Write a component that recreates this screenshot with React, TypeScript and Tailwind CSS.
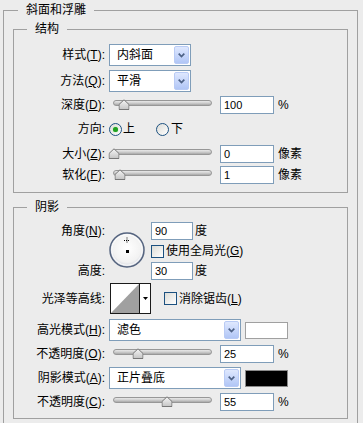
import type { ReactNode } from "react";

const Label = ({ t, k }: { t: string; k?: string }) => (
  <div className="w-[91px] shrink-0 text-right leading-[16px]">
    {t}
    {k ? (
      <>
        (<span className="underline">{k}</span>)
      </>
    ) : null}
    :
  </div>
);

const DropButton = () => (
  <div className="mr-[1px] flex h-[18px] w-[15px] items-center justify-center rounded-[2px] border border-[#b9cbf5] bg-linear-to-b from-[#dfe8fe] to-[#b1c6f6]">
    <svg width="7" height="5" viewBox="0 0 7 5">
      <path d="M0.7 0.7 L3.5 3.6 L6.3 0.7" fill="none" stroke="#4d6185" strokeWidth="1.7" />
    </svg>
  </div>
);

const Select = ({ value, w }: { value: string; w: string }) => (
  <div className={`flex h-[22px] items-center border border-[#7f9db9] bg-white ${w}`}>
    <span className="flex-1 pl-[7px] leading-[16px]">{value}</span>
    <DropButton />
  </div>
);

const Thumb = ({ pct }: { pct: number }) => (
  <svg
    className="absolute top-[-2px] -translate-x-1/2"
    style={{ left: `${pct}%` }}
    width="11"
    height="11"
    viewBox="0 0 11 11"
  >
    <defs>
      <linearGradient id="th" x1="0" y1="0" x2="0" y2="1">
        <stop offset="0" stopColor="#f6f6f6" />
        <stop offset="1" stopColor="#c4c4c4" />
      </linearGradient>
    </defs>
    <path d="M0.5 10.5 V5.5 L5.5 0.8 L10.5 5.5 V10.5 Z" fill="url(#th)" stroke="#777" strokeLinejoin="round" />
  </svg>
);

const Slider = ({ pct }: { pct: number }) => (
  <div className="h-[18px] w-[107px] shrink-0 px-[4px] pt-[4px]">
    <div className="relative h-[6px] rounded-full border border-[#979797] bg-linear-to-b from-[#e8e8e8] via-[#cfcfcf] to-[#a8a8a8]">
      <Thumb pct={pct} />
    </div>
  </div>
);

const Field = ({ v, w = "w-[54px]" }: { v: string; w?: string }) => (
  <div className={`h-[18px] shrink-0 border border-[#7f9db9] bg-white pl-[3px] text-[11px] leading-[16px] ${w}`}>
    {v}
  </div>
);

const Radio = ({ on, className = "" }: { on?: boolean; className?: string }) => (
  <div
    className={`flex h-[13px] w-[13px] shrink-0 items-center justify-center rounded-full border border-[#1c5180] bg-linear-to-br from-[#dcdcd7] to-white ${className}`}
  >
    {on ? <div className="h-[5px] w-[5px] rounded-full bg-[#21a121] shadow-[0_0_1px_#5fd35f]" /> : null}
  </div>
);

const Check = ({ className = "" }: { className?: string }) => (
  <div className={`h-[13px] w-[13px] shrink-0 border border-[#1c5180] bg-linear-to-br from-[#dcdcd7] to-white ${className}`} />
);

const Row = ({ className = "", children }: { className?: string; children: ReactNode }) => (
  <div className={`flex items-center gap-[4px] ${className}`}>{children}</div>
);

const AngleDial = () => (
  <svg width="36" height="36" viewBox="0 0 36 36" className="ml-[4px] mb-[3px] shrink-0">
    <defs>
      <radialGradient id="dial" cx="0.5" cy="0.45" r="0.55">
        <stop offset="0" stopColor="#ffffff" />
        <stop offset="0.75" stopColor="#f2f2f2" />
        <stop offset="1" stopColor="#cfd3dd" />
      </radialGradient>
    </defs>
    <circle cx="18" cy="18" r="17" fill="url(#dial)" stroke="#55647f" strokeWidth="1.5" />
    <circle cx="18" cy="18" r="15.3" fill="none" stroke="#ffffff" strokeOpacity="0.8" />
    <path d="M15 8.5 H21 M18 5.5 V11.5" stroke="#000" strokeDasharray="1 1" />
    <rect x="17" y="18" width="3" height="3" fill="#000" />
  </svg>
);

const Contour = () => (
  <div className="ml-[1px] flex h-[31px] w-[41px] shrink-0 border border-[#1a1a1a] bg-white">
    <svg width="28" height="29" viewBox="0 0 28 29" className="shrink-0">
      <polygon points="0,29 28,0 28,29" fill="#a0a0a0" />
    </svg>
    <div className="flex flex-1 items-center justify-center border-l border-[#1a1a1a]">
      <svg width="5" height="3" viewBox="0 0 5 3">
        <polygon points="0,0 5,0 2.5,3" fill="#000" />
      </svg>
    </div>
  </div>
);

export default function App() {
  return (
    <div className="h-[423px] w-[363px] overflow-hidden bg-[#ececec] pl-[3px] font-['Liberation_Sans','Noto_Sans_CJK_SC',sans-serif] text-[12px] text-black">
      <fieldset className="w-[355px] border border-[#a0a0a0] px-[9px] pb-[10px]">
        <legend className="ml-[5px] px-[8px] leading-[21px]">斜面和浮雕</legend>

        <fieldset className="border border-[#a0a0a0] pt-[6px] pb-[8px]">
          <legend className="ml-[13px] px-[8px] leading-[17px]">结构</legend>
          <Row className="h-[22px]">
            <Label t="样式" k="T" />
            <Select value="内斜面" w="w-[82px]" />
          </Row>
          <Row className="mt-[4px] h-[22px]">
            <Label t="方法" k="Q" />
            <Select value="平滑" w="w-[82px]" />
          </Row>
          <Row className="mt-[4px] h-[18px]">
            <Label t="深度" k="D" />
            <Slider pct={10} />
            <Field v="100" />
            <span className="leading-[16px]">%</span>
          </Row>
          <Row className="mt-[6px] h-[18px]">
            <Label t="方向" />
            <div className="flex items-center">
              <Radio on />
              <span className="ml-[1px] leading-[16px]">上</span>
              <Radio className="ml-[21px]" />
              <span className="ml-[2px] leading-[16px]">下</span>
            </div>
          </Row>
          <Row className="mt-[7px] h-[18px]">
            <Label t="大小" k="Z" />
            <Slider pct={0} />
            <Field v="0" />
            <span className="leading-[16px]">像素</span>
          </Row>
          <Row className="mt-[3px] h-[18px]">
            <Label t="软化" k="F" />
            <Slider pct={6} />
            <Field v="1" />
            <span className="leading-[16px]">像素</span>
          </Row>
        </fieldset>

        <fieldset className="mt-[4px] border border-[#a0a0a0] pt-[4px] pb-[7px]">
          <legend className="ml-[13px] px-[8px] leading-[21px]">阴影</legend>
          <div className="flex h-[58px] items-center">
            <div className="flex h-full w-[91px] shrink-0 flex-col justify-between">
              <div className="flex h-[18px] items-center justify-end">
                <Label t="角度" k="N" />
              </div>
              <div className="flex h-[18px] items-center justify-end">
                <Label t="高度" />
              </div>
            </div>
            <AngleDial />
            <div className="ml-[6px] flex flex-col">
              <div className="flex h-[18px] items-center gap-[2px]">
                <Field v="90" w="w-[42px]" />
                <span className="leading-[16px]">度</span>
              </div>
              <div className="flex h-[22px] items-center gap-[2px]">
                <Check />
                <span className="leading-[16px]">
                  使用全局光(<span className="underline">G</span>)
                </span>
              </div>
              <div className="flex h-[18px] items-center gap-[2px]">
                <Field v="30" w="w-[42px]" />
                <span className="leading-[16px]">度</span>
              </div>
            </div>
          </div>
          <Row className="mt-[3px] h-[31px]">
            <Label t="光泽等高线" />
            <Contour />
            <Check className="ml-[9px]" />
            <span className="-ml-[2px] leading-[16px]">
              消除锯齿(<span className="underline">L</span>)
            </span>
          </Row>
          <Row className="mt-[5px] h-[22px]">
            <Label t="高光模式" k="H" />
            <Select value="滤色" w="w-[132px]" />
            <div className="h-[17px] w-[43px] border border-[#a0a0a0] bg-white" />
          </Row>
          <Row className="mt-[4px] h-[18px]">
            <Label t="不透明度" k="O" />
            <Slider pct={25} />
            <Field v="25" />
            <span className="leading-[16px]">%</span>
          </Row>
          <Row className="mt-[4px] h-[22px]">
            <Label t="阴影模式" k="A" />
            <Select value="正片叠底" w="w-[132px]" />
            <div className="h-[17px] w-[43px] border border-[#8a8a8a] bg-black" />
          </Row>
          <Row className="mt-[4px] h-[18px]">
            <Label t="不透明度" k="C" />
            <Slider pct={55} />
            <Field v="55" />
            <span className="leading-[16px]">%</span>
          </Row>
        </fieldset>
      </fieldset>
    </div>
  );
}
